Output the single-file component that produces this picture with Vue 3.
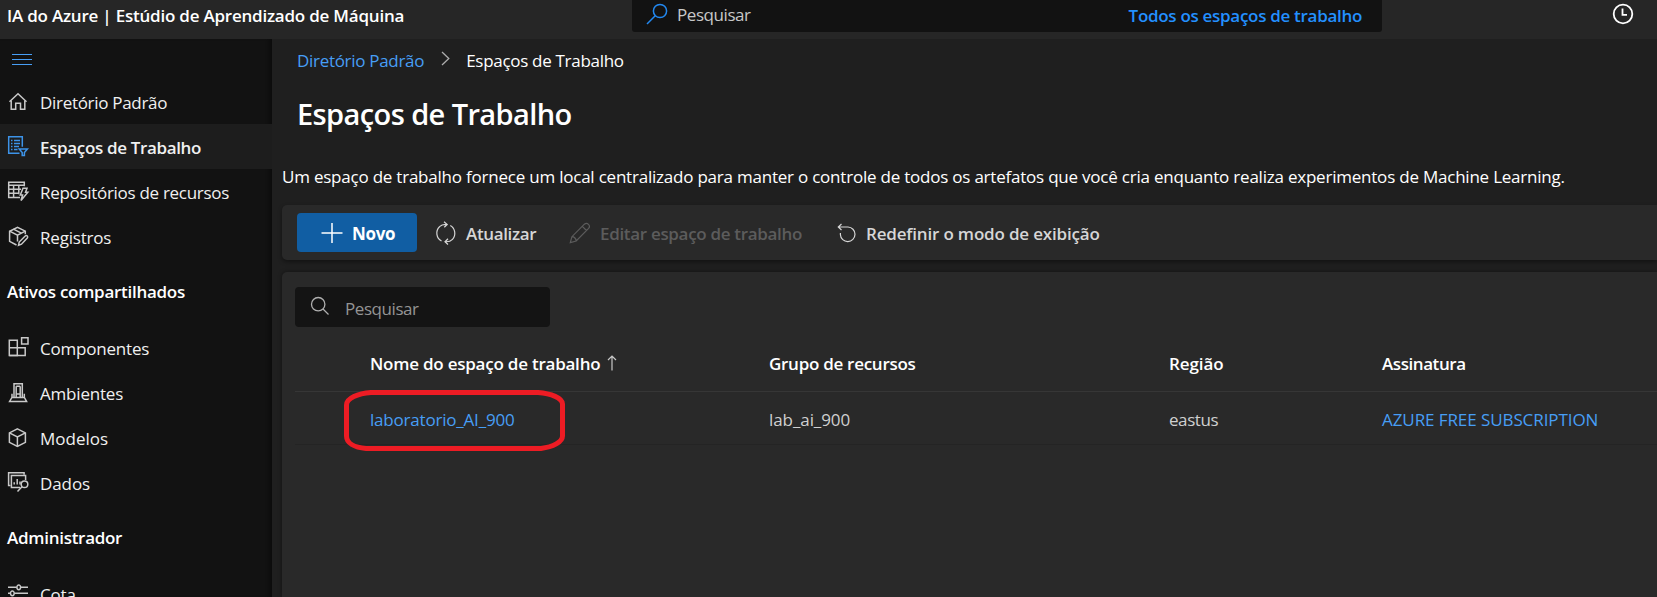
<script setup>
const mainNav = [
  { label: 'Diretório Padrão', icon: 'home', cls: 't3' },
  { label: 'Espaços de Trabalho', icon: 'list', cls: 't35', active: true },
  { label: 'Repositórios de recursos', icon: 'table', cls: 't3' },
  { label: 'Registros', icon: 'registry', cls: 't2' },
]
const assets = [
  { label: 'Componentes', icon: 'components', cls: 't2' },
  { label: 'Ambientes', icon: 'env', cls: 't2' },
  { label: 'Modelos', icon: 'cube', cls: 't0' },
  { label: 'Dados', icon: 'data', cls: 't1' },
]
const groups = [
  { title: '', items: mainNav },
  { title: 'Ativos compartilhados', items: assets },
  { title: 'Administrador', items: [{ label: 'Cota', icon: 'quota', cls: 't2' }] },
]
const icons = {
  home: ['M3.5 12.7L12 4.7l8.5 8', 'M5.2 11.5v8.8h4.5v-6h4.8v6h4.3v-8.8'],
  list: ['M13.5 19.2H2.7V2.7h13.6v10', 'M5 6.5h1.5M8 6.5h6M5 9.5h1.5M8 9.5h6M5 12.5h1.5M8 12.5h5M5 15.5h1.5M8 15.5h3.5', 'M13.2 15h8.2l-3 3.6v3h-2.2v-3z'],
  table: ['M14 18.5H2.7V3.3h15.6v4', 'M2.7 6.3h15.6M2.7 10.3H15M2.7 14.3H13M7.6 6.3v12M12.8 6.3v9', 'M17 9.3h4l-1.5 4h2.3L15 21.5l1.6-5.5h-2.3z'],
  registry: ['M10.5 21L3.6 17.4V7.2L11.5 3.4l7.8 3.8v3', 'M3.6 7.2l7.9 4 7.8-4M7.4 5.2l8 4M11.5 11.2v6.3', 'M12.5 21.3l.7-3.3 6-6c1.6-1.2 3.2.7 2.1 2l-5.8 6.2z'],
  components: ['M3.3 5.3h8v15.2h-8z', 'M3.3 12.8h15.9v7.7H3.3', 'M15.6 2.8H22v6.2h-6.4z'],
  env: ['M8 17.5V3.7h8.3v13.8', 'M10.2 6.3h4M10.2 14h4M10.2 6.3V17M14.2 6.3V17', 'M6 13.8v3.5L3.6 21.4h17L18.3 17.3v-3.5M6 17.5h12.3'],
  cube: ['M11.4 3.9l8 4v9.4l-8 4.1-8-4.1V7.9z', 'M3.4 7.9l8 4 8-4M11.4 11.9v9.5'],
  data: ['M4.5 15.4H2.6V2.7h15.5v2', 'M14 17.4H5.4V5.6h14.2V10', 'M8.2 14.5v-2.3M11.2 14.5V9M14 14.5v-3', 'M21.8 14.2a3.3 3.3 0 1 1-6.6 0 3.3 3.3 0 0 1 6.6 0zM16.2 16.6L11.5 21.6'],
  quota: ['M2 6.3h8.7M14.7 6.3H22M2 12.3h2.4M8.3 12.3H22M2 18.3h12', 'M10.9 6.3a1.8 2.3 0 1 1 3.7 0 1.8 2.3 0 0 1-3.7 0M4.5 12.3a1.8 2.3 0 1 1 3.7 0 1.8 2.3 0 0 1-3.7 0'],
}
</script>

<template>
  <div class="app">
    <header class="top">
      <div class="brand t2">IA do Azure | Estúdio de Aprendizado de Máquina</div>
      <div class="topsearch">
        <svg class="lens" width="22" height="22" viewBox="0 0 22 22"><circle cx="14" cy="8" r="6.6" /><path d="M9.2 12.8L1 21" /></svg>
        <span class="ph t4">Pesquisar</span>
        <span class="scope">Todos os espaços de trabalho</span>
      </div>
      <svg class="clock" width="22" height="22" viewBox="0 0 22 22"><circle cx="11" cy="11" r="9.3" /><path d="M10.5 5.5v6.3h4.5" /></svg>
    </header>
    <div class="body">
      <nav class="side">
        <div class="burger"><i></i><i></i><i></i></div>
        <template v-for="g in groups" :key="g.title">
          <div v-if="g.title" class="section">{{ g.title }}</div>
          <div v-for="n in g.items" :key="n.label" class="item" :class="{ active: n.active }">
            <svg width="24" height="24" viewBox="0 0 24 24"><path v-for="(d, i) in icons[n.icon]" :key="i" :d="d" /></svg>
            <span :class="n.cls">{{ n.label }}</span>
          </div>
        </template>
      </nav>
      <main class="main">
        <div class="crumbs">
          <a class="t3">Diretório Padrão</a>
          <svg width="10" height="15" viewBox="0 0 10 15"><path d="M1 1l6.8 6.5L1 14" /></svg>
          <span class="cur">Espaços de Trabalho</span>
        </div>
        <h1>Espaços de Trabalho</h1>
        <p>Um espaço de trabalho fornece um local centralizado para manter o controle de todos os artefatos que você cria enquanto realiza experimentos de Machine Learning.</p>
        <div class="toolbar">
          <button class="new">
            <svg width="22" height="22" viewBox="0 0 22 22"><path d="M11 1v20M.5 11h21" /></svg>
            <span>Novo</span>
          </button>
          <button class="cmd refresh">
            <svg width="22" height="24" viewBox="0 0 22 24"><path d="M6.5 20A9 9 0 0 1 4.5 5.7Q7 3 12 3.4M9 .8L12.2 3.5 9.3 6.3M15.3 4.5A9 9 0 0 1 17.5 18.3Q15 21 10.3 20.7M13 17.8L10 20.7l3 2.8" /></svg>
            <span>Atualizar</span>
          </button>
          <button class="cmd edit" disabled>
            <svg width="22" height="22" viewBox="0 0 22 22"><path d="M1.3 20.7l1.6-6L15.4 2.2c2.8-2.5 6.6 1.4 4.2 4.2L7.2 19zM13.3 4.3l4.2 4.2M2.9 14.7c2.3 0 4.3 2 4.3 4.3" /></svg>
            <span>Editar espaço de trabalho</span>
          </button>
          <button class="cmd reset">
            <svg width="20" height="20" viewBox="0 0 20 20"><path d="M1.3 4H11a7.3 7.3 0 1 1-7.6 7.7V10M4.5 1L1.3 4l3.2 3" /></svg>
            <span>Redefinir o modo de exibição</span>
          </button>
        </div>
        <section class="panel">
          <div class="filter">
            <svg width="20" height="20" viewBox="0 0 20 20"><circle cx="8.2" cy="8.2" r="6.7" /><path d="M13 13l5.5 5.5" /></svg>
            <span class="t4">Pesquisar</span>
          </div>
          <div class="grid head">
            <div><span class="t2">Nome do espaço de trabalho</span><svg width="10" height="16" viewBox="0 0 10 16"><path d="M5 15.5V1M1 5l4-4 4 4" /></svg></div>
            <div class="t25">Grupo de recursos</div>
            <div class="t1">Região</div>
            <div class="t4">Assinatura</div>
          </div>
          <div class="grid row">
            <div class="named"><a class="t2">laboratorio_AI_900</a><svg class="mark" width="222" height="62" viewBox="0 0 222 62"><path d="M27 2.5H194C207 3.5 218.5 8 218.5 14V46C218.5 52 209 57 197 58.5H22C10 57.5 2.5 53 2.5 46V15C2.5 8 14 3.5 27 2.5z" /></svg></div>
            <div class="t1">lab_ai_900</div>
            <div class="t4">eastus</div>
            <div><a class="t1">AZURE FREE SUBSCRIPTION</a></div>
          </div>
        </section>
      </main>
    </div>
  </div>
</template>

<style>
body { margin: 0; background: #1f1f1f; }
</style>
<style scoped>
.app { width: 100vw; height: 597px; overflow: hidden; display: flex; flex-direction: column; font: 400 17px/23px "Open Sans", "Noto Sans", sans-serif; color: #fff; background: #1f1f1f; white-space: nowrap; }
svg { fill: none; stroke: currentColor; flex: none; display: block; }
.t0 { letter-spacing: 0; }
.t1 { letter-spacing: -.08px; }
.t2 { letter-spacing: -.2px; }
.t25 { letter-spacing: -.28px; }
.t3 { letter-spacing: -.3px; }
.t35 { letter-spacing: -.35px; }
.t4 { letter-spacing: -.43px; }
.top { height: 39px; flex: none; background: #262626; display: flex; align-items: flex-start; }
.brand { width: 632px; padding: 4px 0 0 7px; box-sizing: border-box; font-weight: 600; letter-spacing: -.22px; }
.topsearch { width: 750px; height: 32px; box-sizing: border-box; background: #121212; border-radius: 0 0 3px 3px; display: flex; padding: 3px 20px 0 14px; }
.lens { color: #2288f0; stroke-width: 1.5; }
.ph { margin-left: 9px; color: #c8c8c8; }
.scope { margin: 1px 0 0 auto; color: #2390ff; font-weight: 600; letter-spacing: -.3px; }
.clock { margin: 3px 0 0 230px; stroke-width: 1.8; }
.body { flex: 1; min-height: 0; display: flex; }
.side { width: 272px; flex: none; background: #121212; overflow: hidden; box-shadow: inset -5px 0 4px -3px #0b0b0b; }
.burger { height: 40px; box-sizing: border-box; padding: 15px 0 0 12px; display: flex; flex-direction: column; gap: 4px; }
.burger i { width: 20px; height: 1px; background: #479ef5; }
.item { height: 45px; box-sizing: border-box; display: flex; padding: 12px 0 0 6px; color: #f0f0f0; }
.item svg { margin: -2px 10px 0 0; color: #c9c9c9; stroke-width: 1.5; }
.item.active { background: #1d1d1d; font-weight: 600; }
.item.active svg { color: #3d93e8; }
.section { height: 66px; box-sizing: border-box; padding: 21px 0 0 7px; font-weight: 600; letter-spacing: -.28px; }
.main { flex: 1; min-width: 0; padding-left: 10px; display: flex; flex-direction: column; }
a { color: #479ef5; }
.crumbs { display: flex; padding: 10px 0 0 15px; }
.crumbs svg { margin: 2px 15px 0 17px; color: #adadad; stroke-width: 1.3; }
.cur { letter-spacing: -.3px; }
h1 { margin: 22px 0 0 15px; font-size: 29px; line-height: 40px; font-weight: 600; letter-spacing: -.6px; }
p { margin: 31px 0 0; letter-spacing: -.22px; }
.toolbar { margin-top: 17px; height: 55px; flex: none; background: #292929; border-radius: 5px 0 0 5px; box-shadow: 0 2px 4px #0006; display: flex; padding: 8px 0 0 15px; box-sizing: border-box; }
button { font: inherit; font-weight: 600; border: 0; margin: 0; background: none; color: #d6d6d6; display: flex; padding: 9px 0 0; box-sizing: border-box; height: 39px; align-items: flex-start; }
.new { width: 120px; background: #115ea3; color: #fff; border-radius: 4px; padding-left: 24px; font-weight: 700; letter-spacing: -.3px; }
.new svg { margin-right: 9px; stroke-width: 1.5; }
.cmd svg { stroke-width: 1.2; }
.refresh { margin-left: 18px; letter-spacing: -.35px; width: 116px; }
.refresh svg { margin: -1px 9px 0 0; }
.edit { margin-left: 18px; color: #5c5c5c; letter-spacing: -.32px; width: 250px; }
.edit svg { margin-right: 9px; }
.reset { margin-left: 18px; letter-spacing: -.18px; }
.reset svg { margin: 1px 9px 0 0; }
.panel { margin-top: 12px; flex: 1; background: #292929; border-radius: 5px 0 0 0; box-shadow: 0 0 4px #0006; padding: 15px 0 0 13px; }
.filter { width: 255px; height: 40px; box-sizing: border-box; background: #141414; border-radius: 4px; padding: 10px 0 0 15px; display: flex; color: #949494; }
.filter svg { margin: -1px 15px 0 0; stroke-width: 1.3; color: #b0b0b0; }
.grid { display: grid; grid-template-columns: 399px 400px 213px 1fr; padding-left: 75px; box-sizing: border-box; }
.grid > div { display: flex; }
.head { height: 65px; padding-top: 25px; border-bottom: 1px solid #363636; font-weight: 600; }
.head .t2 { letter-spacing: -.23px; }
.head svg { margin: 3px 0 0 7px; color: #c8c8c8; stroke-width: 1.2; }
.row { height: 53px; padding-top: 16px; border-bottom: 1px solid #242424; color: #d0d0d0; }
.named { position: relative; }
.mark { position: absolute; left: -26px; top: -18px; color: #ed1c24; stroke-width: 5; }
</style>
